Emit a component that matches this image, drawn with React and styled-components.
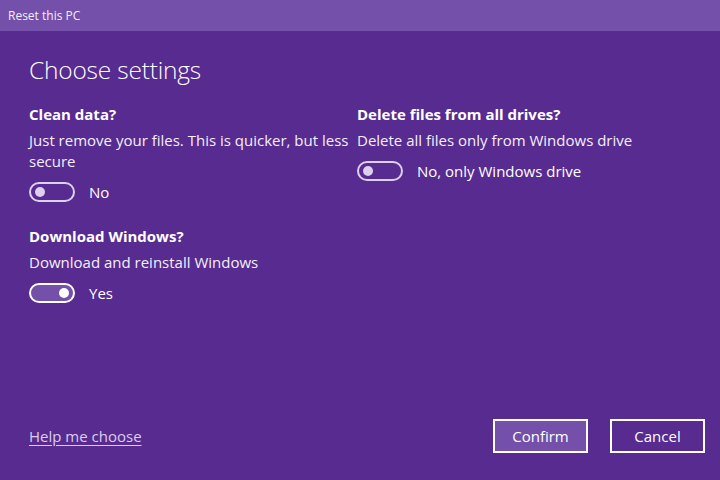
import React from "react";
import styled, { createGlobalStyle } from "styled-components";

const GlobalStyle = createGlobalStyle`
  html, body {
    margin: 0;
    padding: 0;
    background: #572b8f;
  }
  body {
    font-family: "Open Sans", "Noto Sans", "Liberation Sans", sans-serif;
    color: #fff;
  }
`;

const Window = styled.div`
  width: 720px;
  height: 480px;
  display: flex;
  flex-direction: column;
  background: #572b8f;
  overflow: hidden;
`;

const TitleBar = styled.div`
  height: 31px;
  flex-shrink: 0;
  display: flex;
  align-items: center;
  padding: 0 8px;
  background: #7450aa;
  font-size: 12px;
  color: #f3eefa;
`;

const Content = styled.div`
  flex: 1;
  display: flex;
  flex-direction: column;
  padding: 23px 15px 27px 29px;
`;

const Heading = styled.h1`
  margin: 0 0 18px;
  font-size: 24.5px;
  font-weight: 300;
  line-height: 32px;
  letter-spacing: -0.2px;
`;

const Columns = styled.div`
  display: grid;
  grid-template-columns: 328px 1fr;
`;

const Column = styled.div`
  display: flex;
  flex-direction: column;
  gap: 24px;
`;

const Section = styled.div`
  display: flex;
  flex-direction: column;
`;

const Label = styled.div`
  font-size: 15px;
  font-weight: 700;
  line-height: 20px;
  margin-bottom: 6px;
`;

const Description = styled.div`
  font-size: 15px;
  line-height: 21px;
  color: #f4effa;
  margin-bottom: 10px;
`;

const ToggleRow = styled.div`
  display: flex;
  align-items: center;
  gap: 14px;
  font-size: 15px;
  line-height: 20px;
`;

const Track = styled.div`
  box-sizing: border-box;
  width: 46px;
  height: 20px;
  border-radius: 10px;
  border: 2px solid ${(p) => (p.on ? "#ffffff" : "#ddd0ee")};
  background: ${(p) => (p.on ? "#7450aa" : "transparent")};
  display: flex;
  align-items: center;
  justify-content: ${(p) => (p.on ? "flex-end" : "flex-start")};
  padding: 0 4px;
`;

const Knob = styled.div`
  width: 10px;
  height: 10px;
  border-radius: 50%;
  background: ${(p) => (p.on ? "#ffffff" : "#ddd0ee")};
`;

const Spacer = styled.div`
  flex: 1;
`;

const Footer = styled.div`
  display: flex;
  align-items: center;
`;

const HelpLink = styled.a`
  font-size: 15px;
  color: #dccdf0;
  text-decoration: underline;
  text-underline-offset: 3px;
  cursor: pointer;
`;

const Buttons = styled.div`
  margin-left: auto;
  display: flex;
  gap: 22px;
`;

const Button = styled.button`
  box-sizing: border-box;
  width: 95px;
  height: 34px;
  border: 2px solid #ffffff;
  background: ${(p) => (p.primary ? "#7450aa" : "transparent")};
  color: #fff;
  font-family: inherit;
  font-size: 15px;
  padding: 0;
`;

const Toggle = ({ on, text }) => (
  <ToggleRow>
    <Track on={on ? 1 : 0}>
      <Knob on={on ? 1 : 0} />
    </Track>
    <span>{text}</span>
  </ToggleRow>
);

const settingsLeft = [
  {
    label: "Clean data?",
    desc: "Just remove your files. This is quicker, but less secure",
    on: false,
    value: "No",
  },
  {
    label: "Download Windows?",
    desc: "Download and reinstall Windows",
    on: true,
    value: "Yes",
  },
];

const settingsRight = [
  {
    label: "Delete files from all drives?",
    desc: "Delete all files only from Windows drive",
    on: false,
    value: "No, only Windows drive",
  },
];

const renderSection = (s) => (
  <Section key={s.label}>
    <Label>{s.label}</Label>
    <Description>{s.desc}</Description>
    <Toggle on={s.on} text={s.value} />
  </Section>
);

export default function App() {
  return (
    <Window>
      <GlobalStyle />
      <TitleBar>Reset this PC</TitleBar>
      <Content>
        <Heading>Choose settings</Heading>
        <Columns>
          <Column>{settingsLeft.map(renderSection)}</Column>
          <Column>{settingsRight.map(renderSection)}</Column>
        </Columns>
        <Spacer />
        <Footer>
          <HelpLink>Help me choose</HelpLink>
          <Buttons>
            <Button primary={1}>Confirm</Button>
            <Button>Cancel</Button>
          </Buttons>
        </Footer>
      </Content>
    </Window>
  );
}
